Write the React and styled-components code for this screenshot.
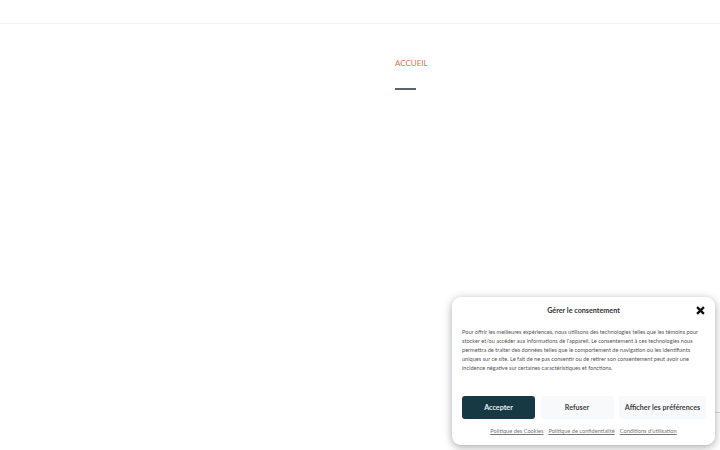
import React from 'react';
import styled, { createGlobalStyle } from 'styled-components';

const GlobalStyle = createGlobalStyle`
  html, body {
    margin: 0;
    height: 100%;
    background: #fff;
    overflow: hidden;
    font-family: 'Lato', 'Liberation Sans', sans-serif;
  }
`;

const Page = styled.div`
  position: relative;
  width: 720px;
  height: 450px;
  overflow: hidden;
`;

const Header = styled.header`
  height: 23px;
  border-bottom: 1px solid #f3f3f3;
`;

const Main = styled.main`
  padding: 34px 0 0 395px;
`;

const Title = styled.h1`
  margin: 0;
  font-size: 8px;
  line-height: 11px;
  font-weight: 400;
  color: #dd7350;
`;

const Rule = styled.div`
  width: 21px;
  height: 2px;
  margin-top: 19px;
  background: #5c6468;
`;

const CaptchaBadge = styled.div`
  position: absolute;
  right: 0;
  top: 412px;
  width: 70px;
  height: 38px;
  border-top: 1px solid #d8d8d8;
`;

const Banner = styled.aside`
  position: absolute;
  left: 452px;
  top: 297px;
  box-sizing: border-box;
  width: 263px;
  height: 148px;
  padding: 8px 10px 0;
  background: #fff;
  border-radius: 9px;
  box-shadow: 0 2px 8px rgba(0, 0, 0, 0.35);
  color: #222;
`;

const BannerHead = styled.div`
  position: relative;
  text-align: center;
  font-size: 7.2px;
  line-height: 11px;
  color: #333;
  font-weight: 700;
`;

const Close = styled.svg`
  position: absolute;
  right: 0;
  top: 1px;
  width: 9px;
  height: 9px;
`;

const Message = styled.p`
  margin: 11px 0 0;
  font-size: 5.6px;
  line-height: 9px;
  color: #555;
`;

const Buttons = styled.div`
  display: flex;
  gap: 5.5px;
  margin-top: 24px;
`;

const Button = styled.button`
  flex: ${({ $wide }) => ($wide ? '0 0 87px' : '0 0 73px')};
  height: 23px;
  padding: 0;
  border: 0;
  border-radius: 3px;
  font: 700 7.2px 'Lato', 'Liberation Sans', sans-serif;
  color: ${({ $primary }) => ($primary ? '#e8eeee' : '#444')};
  background: ${({ $primary }) => ($primary ? '#173944' : '#f8f9fa')};
`;

const Links = styled.div`
  display: flex;
  justify-content: center;
  gap: 5px;
  margin-top: 6.5px;
`;

const PolicyLink = styled.a`
  font-size: 5.65px;
  line-height: 9px;
  color: #777;
  text-decoration: underline;
`;

const App = () => (
  <Page>
    <GlobalStyle />
    <Header />
    <Main>
      <Title>ACCUEIL</Title>
      <Rule />
    </Main>
    <CaptchaBadge />
    <Banner>
      <BannerHead>
        Gérer le consentement
        <Close viewBox="0 0 10 10">
          <path d="M1.2 1.2L8.8 8.8M8.8 1.2L1.2 8.8" stroke="#111" strokeWidth="2.6" />
        </Close>
      </BannerHead>
      <Message>
        Pour offrir les meilleures expériences, nous utilisons des technologies telles que les témoins pour
        stocker et/ou accéder aux informations de l'appareil. Le consentement à ces technologies nous
        permettra de traiter des données telles que le comportement de navigation ou les identifiants
        uniques sur ce site. Le fait de ne pas consentir ou de retirer son consentement peut avoir une
        incidence négative sur certaines caractéristiques et fonctions.
      </Message>
      <Buttons>
        <Button $primary>Accepter</Button>
        <Button>Refuser</Button>
        <Button $wide>Afficher les préférences</Button>
      </Buttons>
      <Links>
        <PolicyLink>Politique des Cookies</PolicyLink>
        <PolicyLink>Politique de confidentialité</PolicyLink>
        <PolicyLink>Conditions d'utilisation</PolicyLink>
      </Links>
    </Banner>
  </Page>
);

export default App;
